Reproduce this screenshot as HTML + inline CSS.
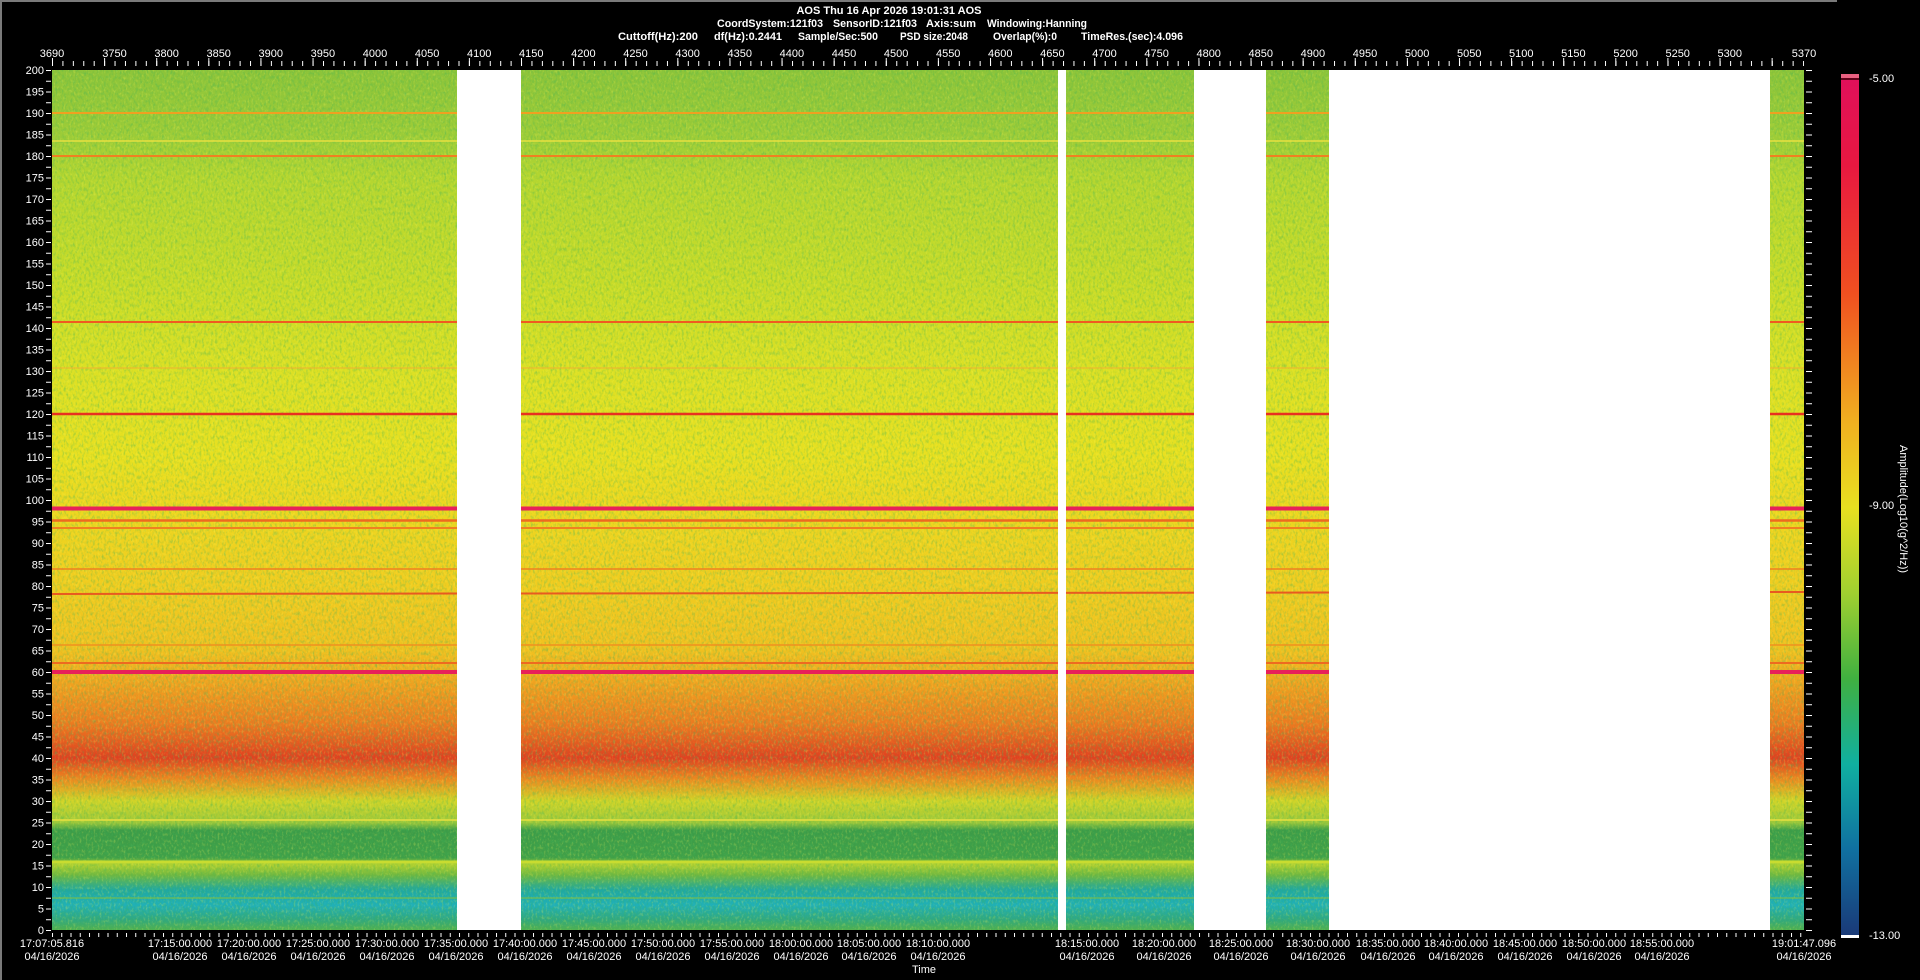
<!DOCTYPE html>
<html><head><meta charset="utf-8">
<style>
html,body{margin:0;padding:0;background:#000;width:1920px;height:980px;overflow:hidden}
svg{display:block}
text{font-family:"Liberation Sans",sans-serif;fill:#fff;font-size:11px}
.b{font-weight:bold;font-size:11px}
</style></head><body>
<svg width="1920" height="980" viewBox="0 0 1920 980" xmlns="http://www.w3.org/2000/svg">
<defs>
<linearGradient id="sg" gradientUnits="userSpaceOnUse" x1="0" y1="70" x2="0" y2="930">
<stop offset="0" stop-color="#8cc43a"/>
<stop offset="0.075" stop-color="#9ccc38"/>
<stop offset="0.125" stop-color="#b4d630"/>
<stop offset="0.25" stop-color="#c8dc28"/>
<stop offset="0.35" stop-color="#dce024"/>
<stop offset="0.45" stop-color="#e8e020"/>
<stop offset="0.5" stop-color="#ecd820"/>
<stop offset="0.6" stop-color="#f0cc20"/>
<stop offset="0.675" stop-color="#f0c020"/>
<stop offset="0.715" stop-color="#f0a020"/>
<stop offset="0.76" stop-color="#ec7a20"/>
<stop offset="0.8" stop-color="#e04020"/>
<stop offset="0.825" stop-color="#ec8a20"/>
<stop offset="0.85" stop-color="#d0d428"/>
<stop offset="0.875" stop-color="#9cc83a"/>
<stop offset="0.884" stop-color="#3c9c48"/>
<stop offset="0.916" stop-color="#40a048"/>
<stop offset="0.924" stop-color="#b0d030"/>
<stop offset="0.936" stop-color="#70b840"/>
<stop offset="0.953" stop-color="#20a8a0"/>
<stop offset="0.971" stop-color="#20b0b8"/>
<stop offset="0.988" stop-color="#30a880"/>
<stop offset="1" stop-color="#50b050"/>
</linearGradient>
<linearGradient id="cb" x1="0" y1="0" x2="0" y2="1">
<stop offset="0" stop-color="#e0105a"/>
<stop offset="0.1" stop-color="#e81840"/>
<stop offset="0.25" stop-color="#f05020"/>
<stop offset="0.4" stop-color="#f0b020"/>
<stop offset="0.5" stop-color="#e8e020"/>
<stop offset="0.6" stop-color="#a0d030"/>
<stop offset="0.7" stop-color="#40b040"/>
<stop offset="0.8" stop-color="#10b0a0"/>
<stop offset="0.9" stop-color="#1070a0"/>
<stop offset="1" stop-color="#1a3a78"/>
</linearGradient>
<filter id="nz" x="0" y="0" width="100%" height="100%">
<feTurbulence type="fractalNoise" baseFrequency="0.45 0.25" numOctaves="2" seed="3"/>
<feColorMatrix type="matrix" values="0 0 0 0 0.05  0 0 0 0 0.45  0 0 0 0 0.1  0 0 0 2.2 -1.0"/>
</filter>
<filter id="nz2" x="0" y="0" width="100%" height="100%">
<feTurbulence type="fractalNoise" baseFrequency="0.5 0.3" numOctaves="2" seed="9"/>
<feColorMatrix type="matrix" values="0 0 0 0 1  0 0 0 0 0.95  0 0 0 0 0.1  0 0 0 2.2 -1.1"/>
</filter>
<clipPath id="seg">
<rect x="52" y="70" width="405" height="860"/>
<rect x="521" y="70" width="537" height="860"/>
<rect x="1066" y="70" width="128" height="860"/>
<rect x="1266" y="70" width="63" height="860"/>
<rect x="1770" y="70" width="34" height="860"/>
</clipPath>
<pattern id="tt" patternUnits="userSpaceOnUse" x="52" y="0" width="10.423" height="10"><rect x="0" y="0" width="1" height="10" fill="#fff"/></pattern>
<pattern id="ttM" patternUnits="userSpaceOnUse" x="52" y="0" width="52.11" height="10"><rect x="0" y="0" width="1" height="10" fill="#fff"/></pattern>
<pattern id="yt" patternUnits="userSpaceOnUse" x="0" y="70" width="10" height="10.75"><rect x="0" y="0" width="10" height="1" fill="#fff"/></pattern>
<pattern id="bt" patternUnits="userSpaceOnUse" x="52" y="0" width="9.25" height="10"><rect x="0" y="0" width="1" height="10" fill="#fff"/></pattern>
</defs>
<rect x="0" y="0" width="1837" height="2" fill="#7a7a7a"/>
<rect x="0" y="0" width="2" height="980" fill="#7a7a7a"/>

<rect x="52" y="70" width="1752" height="860" fill="#fff"/>
<g clip-path="url(#seg)">
<rect x="52" y="70" width="1752" height="860" fill="url(#sg)"/>
<rect x="52" y="70" width="1752" height="860" filter="url(#nz)" opacity="0.45"/>
<rect x="52" y="70" width="1752" height="860" filter="url(#nz2)" opacity="0.35"/>
<g stroke-width="2" fill="none">
<line x1="52" x2="1804" y1="113" y2="113" stroke="#f0a020"/>
<line x1="52" x2="1804" y1="141" y2="141" stroke="#e8e040" stroke-width="1.5"/>
<line x1="52" x2="1804" y1="156" y2="156" stroke="#f08020"/>
<line x1="52" x2="1804" y1="322" y2="322" stroke="#f05a20"/>
<line x1="52" x2="1804" y1="368" y2="368" stroke="#f0b030" stroke-width="1"/>
<line x1="52" x2="1804" y1="414" y2="414" stroke="#e83020" stroke-width="2.5"/>
<line x1="52" x2="1804" y1="508.5" y2="508.5" stroke="#e8205a" stroke-width="4"/>
<line x1="52" x2="1804" y1="520.5" y2="520.5" stroke="#ee6a20" stroke-width="2.5"/>
<line x1="52" x2="1804" y1="528" y2="528" stroke="#f08020"/>
<line x1="52" x2="1804" y1="569" y2="569" stroke="#f08020" stroke-width="1.5"/>
<line x1="52" x2="1804" y1="594" y2="592" stroke="#e85a20" stroke-width="2"/>
<line x1="52" x2="1804" y1="645" y2="645" stroke="#f09020" stroke-width="1.5"/>
<line x1="52" x2="1804" y1="663" y2="663" stroke="#ee6a20"/>
<line x1="52" x2="1804" y1="672" y2="672" stroke="#e8205a" stroke-width="4"/>
<line x1="52" x2="1804" y1="820" y2="820" stroke="#e8e040" stroke-width="1.5"/>
<line x1="52" x2="1804" y1="862" y2="862" stroke="#c8dc30" stroke-width="3"/>
<line x1="52" x2="1804" y1="898" y2="898" stroke="#80c040" stroke-width="1"/>
</g>
</g>

<rect x="52" y="61" width="1752" height="5" fill="url(#tt)"/>
<rect x="52" y="58" width="1752" height="8" fill="url(#ttM)"/>
<rect x="46" y="70" width="5" height="861" fill="url(#yt)"/>
<rect x="1806" y="70" width="6" height="861" fill="url(#yt)"/>
<rect x="52" y="933" width="1752" height="4" fill="url(#bt)"/>

<text class="b" x="889" y="14" text-anchor="middle">AOS  Thu 16 Apr 2026 19:01:31  AOS</text>
<text class="b" x="717" y="27" textLength="106" lengthAdjust="spacingAndGlyphs">CoordSystem:121f03</text>
<text class="b" x="833" y="27" textLength="84" lengthAdjust="spacingAndGlyphs">SensorID:121f03</text>
<text class="b" x="926" y="27" textLength="50" lengthAdjust="spacingAndGlyphs">Axis:sum</text>
<text class="b" x="987" y="27" textLength="100" lengthAdjust="spacingAndGlyphs">Windowing:Hanning</text>
<text class="b" x="618" y="40" textLength="80" lengthAdjust="spacingAndGlyphs">Cuttoff(Hz):200</text>
<text class="b" x="714" y="40" textLength="68" lengthAdjust="spacingAndGlyphs">df(Hz):0.2441</text>
<text class="b" x="798" y="40" textLength="80" lengthAdjust="spacingAndGlyphs">Sample/Sec:500</text>
<text class="b" x="900" y="40" textLength="68" lengthAdjust="spacingAndGlyphs">PSD size:2048</text>
<text class="b" x="993" y="40" textLength="64" lengthAdjust="spacingAndGlyphs">Overlap(%):0</text>
<text class="b" x="1081" y="40" textLength="102" lengthAdjust="spacingAndGlyphs">TimeRes.(sec):4.096</text>

<g text-anchor="middle">
<text x="52" y="57">3690</text><text x="114.5" y="57">3750</text><text x="166.6" y="57">3800</text><text x="218.7" y="57">3850</text><text x="270.8" y="57">3900</text><text x="322.9" y="57">3950</text><text x="375" y="57">4000</text><text x="427.1" y="57">4050</text><text x="479.2" y="57">4100</text><text x="531.3" y="57">4150</text><text x="583.4" y="57">4200</text><text x="635.5" y="57">4250</text><text x="687.6" y="57">4300</text><text x="739.8" y="57">4350</text><text x="791.9" y="57">4400</text><text x="844" y="57">4450</text><text x="896.1" y="57">4500</text><text x="948.2" y="57">4550</text><text x="1000.3" y="57">4600</text><text x="1052.4" y="57">4650</text><text x="1104.5" y="57">4700</text><text x="1156.6" y="57">4750</text><text x="1208.7" y="57">4800</text><text x="1260.8" y="57">4850</text><text x="1312.9" y="57">4900</text><text x="1365" y="57">4950</text><text x="1417.1" y="57">5000</text><text x="1469.2" y="57">5050</text><text x="1521.3" y="57">5100</text><text x="1573.4" y="57">5150</text><text x="1625.6" y="57">5200</text><text x="1677.7" y="57">5250</text><text x="1729.8" y="57">5300</text><text x="1804" y="57">5370</text>
</g>

<g text-anchor="end">
<text x="44" y="74">200</text><text x="44" y="95.5">195</text><text x="44" y="117">190</text><text x="44" y="138.5">185</text><text x="44" y="160">180</text><text x="44" y="181.5">175</text><text x="44" y="203">170</text><text x="44" y="224.5">165</text><text x="44" y="246">160</text><text x="44" y="267.5">155</text><text x="44" y="289">150</text><text x="44" y="310.5">145</text><text x="44" y="332">140</text><text x="44" y="353.5">135</text><text x="44" y="375">130</text><text x="44" y="396.5">125</text><text x="44" y="418">120</text><text x="44" y="439.5">115</text><text x="44" y="461">110</text><text x="44" y="482.5">105</text><text x="44" y="504">100</text><text x="44" y="525.5">95</text><text x="44" y="547">90</text><text x="44" y="568.5">85</text><text x="44" y="590">80</text><text x="44" y="611.5">75</text><text x="44" y="633">70</text><text x="44" y="654.5">65</text><text x="44" y="676">60</text><text x="44" y="697.5">55</text><text x="44" y="719">50</text><text x="44" y="740.5">45</text><text x="44" y="762">40</text><text x="44" y="783.5">35</text><text x="44" y="805">30</text><text x="44" y="826.5">25</text><text x="44" y="848">20</text><text x="44" y="869.5">15</text><text x="44" y="891">10</text><text x="44" y="912.5">5</text><text x="44" y="934">0</text>
</g>

<g text-anchor="middle">
<text x="52" y="947">17:07:05.816</text><text x="52" y="960">04/16/2026</text>
<text x="180" y="947">17:15:00.000</text><text x="180" y="960">04/16/2026</text>
<text x="249" y="947">17:20:00.000</text><text x="249" y="960">04/16/2026</text>
<text x="318" y="947">17:25:00.000</text><text x="318" y="960">04/16/2026</text>
<text x="387" y="947">17:30:00.000</text><text x="387" y="960">04/16/2026</text>
<text x="456" y="947">17:35:00.000</text><text x="456" y="960">04/16/2026</text>
<text x="525" y="947">17:40:00.000</text><text x="525" y="960">04/16/2026</text>
<text x="594" y="947">17:45:00.000</text><text x="594" y="960">04/16/2026</text>
<text x="663" y="947">17:50:00.000</text><text x="663" y="960">04/16/2026</text>
<text x="732" y="947">17:55:00.000</text><text x="732" y="960">04/16/2026</text>
<text x="801" y="947">18:00:00.000</text><text x="801" y="960">04/16/2026</text>
<text x="869" y="947">18:05:00.000</text><text x="869" y="960">04/16/2026</text>
<text x="938" y="947">18:10:00.000</text><text x="938" y="960">04/16/2026</text>
<text x="1087" y="947">18:15:00.000</text><text x="1087" y="960">04/16/2026</text>
<text x="1164" y="947">18:20:00.000</text><text x="1164" y="960">04/16/2026</text>
<text x="1241" y="947">18:25:00.000</text><text x="1241" y="960">04/16/2026</text>
<text x="1318" y="947">18:30:00.000</text><text x="1318" y="960">04/16/2026</text>
<text x="1388" y="947">18:35:00.000</text><text x="1388" y="960">04/16/2026</text>
<text x="1456" y="947">18:40:00.000</text><text x="1456" y="960">04/16/2026</text>
<text x="1525" y="947">18:45:00.000</text><text x="1525" y="960">04/16/2026</text>
<text x="1594" y="947">18:50:00.000</text><text x="1594" y="960">04/16/2026</text>
<text x="1662" y="947">18:55:00.000</text><text x="1662" y="960">04/16/2026</text>
<text x="1804" y="947">19:01:47.096</text><text x="1804" y="960">04/16/2026</text>
<text x="924" y="973" font-size="10">Time</text>
</g>

<rect x="1841" y="74" width="18" height="4" fill="#e86080"/>
<rect x="1841" y="78" width="18" height="2" fill="#600018"/>
<rect x="1841" y="80" width="18" height="855" fill="url(#cb)"/>
<rect x="1841" y="935" width="18" height="3" fill="#fff"/>
<text x="1869" y="82">-5.00</text>
<text x="1869" y="509">-9.00</text>
<text x="1869" y="939">-13.00</text>
<text x="0" y="0" font-size="10" transform="translate(1900,445) rotate(90)">Amplitude(Log10(g^2/Hz))</text>
</svg>
</body></html>
